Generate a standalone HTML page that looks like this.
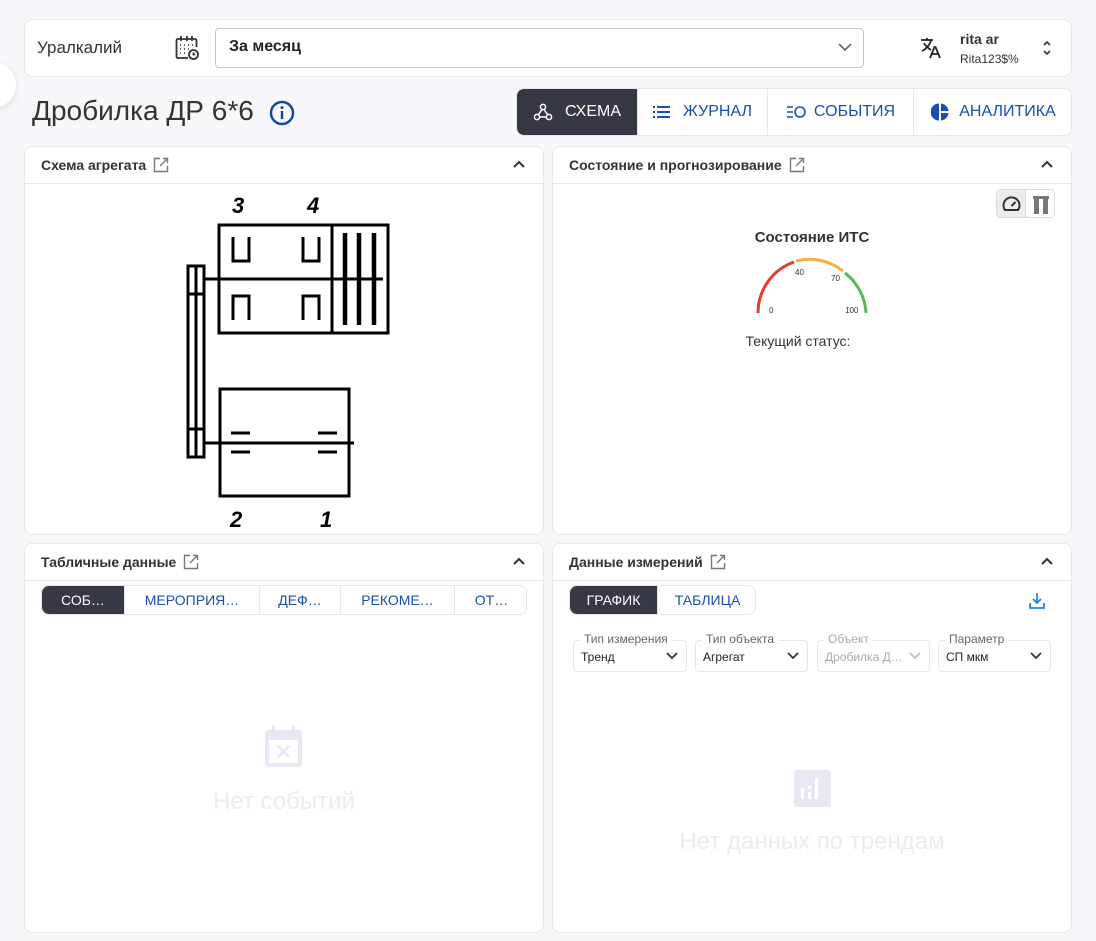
<!DOCTYPE html>
<html><head><meta charset="utf-8"><style>
*{box-sizing:border-box;margin:0;padding:0}
body{width:1096px;height:941px;background:#f8f8fc;font-family:"Liberation Sans",sans-serif;position:relative;overflow:hidden;color:#333}
.abs{position:absolute}
.card{position:absolute;background:#fff;border:1px solid #e6e6f0;border-radius:8px}
.hdr{position:absolute;left:0;right:0;top:0;height:37px;border-bottom:1px solid #e6e6f0;font-weight:bold;font-size:14px;color:#333;padding:10px 16px}
.chev{position:absolute;right:18px;top:13px}
.tab{position:absolute;top:0;height:100%;display:flex;align-items:center;justify-content:center;font-size:14px;color:#1a4db3;border-left:1px solid #e6e6f0}
.sel{position:absolute;top:640px;height:32px;border:1px solid #e6e6f0;border-radius:4px;font-size:12px;padding:9px 7px;color:#222}
.sel .lb{position:absolute;top:-9px;left:6px;background:#fff;padding:0 4px;color:#666;font-size:12px}
.sel svg{position:absolute;right:8px;top:11px}
</style></head><body>
<div class="abs" style="left:-30px;top:62px;width:46px;height:46px;border-radius:50%;background:#fff;box-shadow:0 2px 8px rgba(0,0,0,.12)"></div>

<div class="card" style="left:24px;top:19px;width:1048px;height:58px"></div>
<div class="abs" style="left:37px;top:38px;font-size:17px;color:#333">Уралкалий</div>
<svg class="abs" style="left:175px;top:35px" width="25" height="26" viewBox="0 0 25 26" fill="none" stroke="#333" stroke-width="1.8"><path d="M13 23H3a1.5 1.5 0 0 1-1.5-1.5V5.5A1.5 1.5 0 0 1 3 4h17a1.5 1.5 0 0 1 1.5 1.5V12"/><path d="M6 1v5M12 1v5M17 1v5"/><g stroke-width="1.5"><path d="M5 10h1M9 10h1M13 10h1M17 10h1M5 14h1M9 14h1M13 14h1M5 18h1M9 18h1"/></g><circle cx="18.5" cy="19.5" r="4.5"/><path d="M18.5 17.5v2h1.8"/></svg>
<div class="abs" style="left:215px;top:28px;width:649px;height:40px;border:1px solid #c8c8c8;border-radius:4px;background:#fff"></div>
<div class="abs" style="left:229px;top:38px;font-size:16px;font-weight:bold;color:#222">За месяц</div>
<svg class="abs" style="left:838px;top:43px" width="14" height="9" viewBox="0 0 14 9" fill="none" stroke="#666" stroke-width="1.6"><path d="M1 1l6 6 6-6"/></svg>
<svg class="abs" style="left:920px;top:37px" width="23" height="22" viewBox="0 0 23 22" fill="none" stroke="#222" stroke-width="1.8"><path d="M1 3h12M7 1v2M11 3c-1 5-5 9-9 11M4 6c1.5 3 4 5 7 7"/><path d="M10 21l4.5-11h1L20 21M11.5 17h7"/></svg>
<div class="abs" style="left:960px;top:31px;font-size:14px;font-weight:bold;color:#333">rita ar</div>
<div class="abs" style="left:960px;top:52px;font-size:12px;color:#333">Rita123$%</div>
<svg class="abs" style="left:1042px;top:40px" width="10" height="16" viewBox="0 0 10 16" fill="none" stroke="#333" stroke-width="1.6"><path d="M2 5l3-3 3 3M2 11l3 3 3-3"/></svg>

<div class="abs" style="left:32px;top:95px;font-size:28px;color:#333">Дробилка ДР 6*6</div>
<svg class="abs" style="left:269px;top:100px" width="26" height="26" viewBox="0 0 26 26"><circle cx="13" cy="13" r="11" fill="none" stroke="#0d47a1" stroke-width="2.4"/><rect x="11.8" y="11" width="2.4" height="8" fill="#0d47a1"/><circle cx="13" cy="7.6" r="1.5" fill="#0d47a1"/></svg>

<div class="card" style="left:516px;top:88px;width:556px;height:48px;overflow:hidden">
 <div class="tab" style="left:0;width:120px;background:#363944;color:#fff;font-size:16px;border:none"><svg width="20" height="20" viewBox="0 0 20 20" fill="none" stroke="#fff" stroke-width="1.5" style="margin-right:12px"><circle cx="10" cy="5" r="2.6"/><circle cx="4" cy="15" r="2.6"/><circle cx="16" cy="15" r="2.6"/><path d="M9 7.5l-3.5 5M11 7.5l3.5 5M6.6 15h6.8"/></svg>СХЕМА</div>
 <div class="tab" style="left:120px;width:130px;font-size:16px"><svg width="18" height="14" viewBox="0 0 18 14" fill="#1a4db3" style="margin-right:12px"><rect x="0" y="1" width="2" height="2"/><rect x="4" y="1" width="13" height="2"/><rect x="0" y="6" width="2" height="2"/><rect x="4" y="6" width="13" height="2"/><rect x="0" y="11" width="2" height="2"/><rect x="4" y="11" width="13" height="2"/></svg>ЖУРНАЛ</div>
 <div class="tab" style="left:250px;width:146px;font-size:16px"><svg width="20" height="14" viewBox="0 0 20 14" fill="none" stroke="#1a4db3" stroke-width="1.6" style="margin-right:8px"><path d="M1 2h6M1 7h6M1 12h6"/><circle cx="14" cy="7" r="5"/></svg>СОБЫТИЯ</div>
 <div class="tab" style="left:396px;width:160px;font-size:16px"><svg width="18" height="18" viewBox="0 0 18 18" fill="#1a4db3" style="margin-right:10px"><path d="M8 0.5A8.5 8.5 0 0 0 8 17.5z"/><path d="M10 0.5A8.5 8.5 0 0 1 17.5 8H10z"/><path d="M10 10h7.5A8.5 8.5 0 0 1 10 17.5z"/></svg>АНАЛИТИКА</div>
</div>

<div class="card" style="left:24px;top:146px;width:520px;height:389px">
 <div class="hdr">Схема агрегата <svg width="16" height="16" viewBox="0 0 16 16" fill="none" stroke="#777" stroke-width="1.4" style="vertical-align:-3px;margin-left:3px"><path d="M7 1.5H1.5v13h13V9M10 1.5h4.5V6M14.5 1.5L7 9"/></svg><svg class="chev" width="12" height="8" viewBox="0 0 12 8" fill="none" stroke="#333" stroke-width="2"><path d="M1 7l5-5 5 5"/></svg></div>
</div>
<svg class="abs" style="left:0;top:0" width="400" height="540" fill="none" stroke="#000">
 <g stroke-width="3"><rect x="219" y="225" width="169" height="108"/><path d="M332 225v108"/><path d="M203 279h180"/>
 <rect x="188" y="266" width="16" height="191"/><path d="M196 266v191M188 294h16M188 429h16"/>
 <rect x="220" y="389" width="129" height="107"/><path d="M204 443h150"/>
 <path d="M231 433h19M231 452h19M318 433h19M318 452h19"/>
 <path d="M233 237v24h16v-24M303 237v24h16v-24M233 320v-24h16v24M303 320v-24h16v24"/></g>
 <g stroke-width="4.5"><path d="M345 233v92M359 233v92M374 233v92"/></g>
 <g fill="#000" stroke="none" font-family="Liberation Sans" font-style="italic" font-weight="bold" font-size="22"><text x="232" y="213">3</text><text x="307" y="213">4</text><text x="230" y="527">2</text><text x="320" y="527">1</text></g>
</svg>

<div class="card" style="left:552px;top:146px;width:520px;height:389px">
 <div class="hdr">Состояние и прогнозирование <svg width="16" height="16" viewBox="0 0 16 16" fill="none" stroke="#777" stroke-width="1.4" style="vertical-align:-3px;margin-left:3px"><path d="M7 1.5H1.5v13h13V9M10 1.5h4.5V6M14.5 1.5L7 9"/></svg><svg class="chev" width="12" height="8" viewBox="0 0 12 8" fill="none" stroke="#333" stroke-width="2"><path d="M1 7l5-5 5 5"/></svg></div>
</div>
<div class="abs" style="left:996px;top:189px;width:59px;height:29px;border:1px solid #ddd;border-radius:4px;overflow:hidden;background:#fff">
 <div class="abs" style="left:0;top:0;width:29px;height:29px;background:#ececec;border-right:1px solid #ddd"></div>
 <svg class="abs" style="left:5px;top:5px" width="19" height="18" viewBox="0 0 19 18" fill="none" stroke="#333" stroke-width="2"><path d="M3 15A8 8 0 1 1 16 15z"/><path d="M9.5 11l4-4"/></svg>
 <svg class="abs" style="left:35px;top:5px" width="18" height="19" viewBox="0 0 18 19"><rect x="1" y="1" width="16" height="3" fill="#777"/><rect x="2" y="1" width="5" height="18" fill="#777"/><rect x="11" y="1" width="5" height="18" fill="#777"/></svg>
</div>
<div class="abs" style="left:712px;top:229px;width:200px;text-align:center;font-size:15px;font-weight:bold;color:#333">Состояние ИТС</div>
<svg class="abs" style="left:750px;top:250px" width="125" height="70" viewBox="0 0 125 70" fill="none" stroke-width="3">
 <path d="M8 63A54 54 0 0 1 44 12" stroke="#e53935"/>
 <path d="M46 11A54 54 0 0 1 93 21" stroke="#f9b040"/>
 <path d="M95 23A54 54 0 0 1 116 63" stroke="#5cb85c"/>
 <g fill="#333" stroke="none" font-size="8" font-family="Liberation Sans"><text x="19" y="63">0</text><text x="45" y="25">40</text><text x="81" y="31">70</text><text x="95" y="63">100</text></g>
</svg>
<div class="abs" style="left:698px;top:333px;width:200px;text-align:center;font-size:14px;color:#333">Текущий статус:</div>

<div class="card" style="left:24px;top:543px;width:520px;height:390px">
 <div class="hdr">Табличные данные <svg width="16" height="16" viewBox="0 0 16 16" fill="none" stroke="#777" stroke-width="1.4" style="vertical-align:-3px;margin-left:3px"><path d="M7 1.5H1.5v13h13V9M10 1.5h4.5V6M14.5 1.5L7 9"/></svg><svg class="chev" width="12" height="8" viewBox="0 0 12 8" fill="none" stroke="#333" stroke-width="2"><path d="M1 7l5-5 5 5"/></svg></div>
</div>
<div class="abs" style="left:41px;top:585px;width:486px;height:30px;border:1px solid #e6e6f0;border-radius:8px;overflow:hidden;background:#fff">
 <div class="tab" style="left:0;width:82px;background:#363944;color:#fff;border:none">СОБ…</div>
 <div class="tab" style="left:82px;width:135px">МЕРОПРИЯ…</div>
 <div class="tab" style="left:217px;width:81px">ДЕФ…</div>
 <div class="tab" style="left:298px;width:114px">РЕКОМЕ…</div>
 <div class="tab" style="left:412px;width:74px">ОТ…</div>
</div>
<svg class="abs" style="left:265px;top:726px" width="38" height="41" viewBox="0 0 38 41"><rect x="7" y="0" width="3" height="6" fill="#e8e8f4"/><rect x="27" y="0" width="3" height="6" fill="#e8e8f4"/><rect x="0" y="4" width="37" height="37" rx="3" fill="#e8e8f4"/><rect x="4" y="14" width="29" height="23" fill="#fff"/><path d="M13 20l11 11M24 20l-11 11" stroke="#e8e8f4" stroke-width="2.5"/></svg>
<div class="abs" style="left:164px;top:788px;width:240px;text-align:center;font-size:24px;color:#ebebf5">Нет событий</div>

<div class="card" style="left:552px;top:543px;width:520px;height:390px">
 <div class="hdr">Данные измерений <svg width="16" height="16" viewBox="0 0 16 16" fill="none" stroke="#777" stroke-width="1.4" style="vertical-align:-3px;margin-left:3px"><path d="M7 1.5H1.5v13h13V9M10 1.5h4.5V6M14.5 1.5L7 9"/></svg><svg class="chev" width="12" height="8" viewBox="0 0 12 8" fill="none" stroke="#333" stroke-width="2"><path d="M1 7l5-5 5 5"/></svg></div>
</div>
<div class="abs" style="left:569px;top:585px;width:187px;height:30px;border:1px solid #e6e6f0;border-radius:8px;overflow:hidden;background:#fff">
 <div class="tab" style="left:0;width:87px;background:#363944;color:#fff;border:none">ГРАФИК</div>
 <div class="tab" style="left:87px;width:100px">ТАБЛИЦА</div>
</div>
<svg class="abs" style="left:1029px;top:592px" width="16" height="17" viewBox="0 0 16 17" fill="none" stroke="#1e88e5" stroke-width="1.8"><path d="M8 1v10M4 7l4 4 4-4M1 11v5h14v-5"/></svg>
<div class="sel" style="left:573px;width:114px"><span class="lb">Тип измерения</span>Тренд<svg width="12" height="8" viewBox="0 0 12 8" fill="none" stroke="#333" stroke-width="1.8"><path d="M1 1l5 5 5-5"/></svg></div>
<div class="sel" style="left:695px;width:113px"><span class="lb">Тип объекта</span>Агрегат<svg width="12" height="8" viewBox="0 0 12 8" fill="none" stroke="#333" stroke-width="1.8"><path d="M1 1l5 5 5-5"/></svg></div>
<div class="sel" style="left:817px;width:113px;color:#aaa"><span class="lb" style="color:#aaa">Объект</span>Дробилка Д…<svg width="12" height="8" viewBox="0 0 12 8" fill="none" stroke="#bbb" stroke-width="1.8"><path d="M1 1l5 5 5-5"/></svg></div>
<div class="sel" style="left:938px;width:113px"><span class="lb">Параметр</span>СП мкм<svg width="12" height="8" viewBox="0 0 12 8" fill="none" stroke="#333" stroke-width="1.8"><path d="M1 1l5 5 5-5"/></svg></div>
<svg class="abs" style="left:794px;top:770px" width="37" height="37" viewBox="0 0 37 37"><rect width="37" height="37" rx="3" fill="#e8e8f4"/><rect x="7" y="18" width="3" height="11" fill="#fff"/><rect x="14" y="22" width="3" height="7" fill="#fff"/><rect x="14" y="16" width="3" height="3" fill="#fff"/><rect x="21" y="8" width="3" height="21" fill="#fff"/></svg>
<div class="abs" style="left:632px;top:828px;width:360px;text-align:center;font-size:24px;color:#ebebf5">Нет данных по трендам</div>
</body></html>
